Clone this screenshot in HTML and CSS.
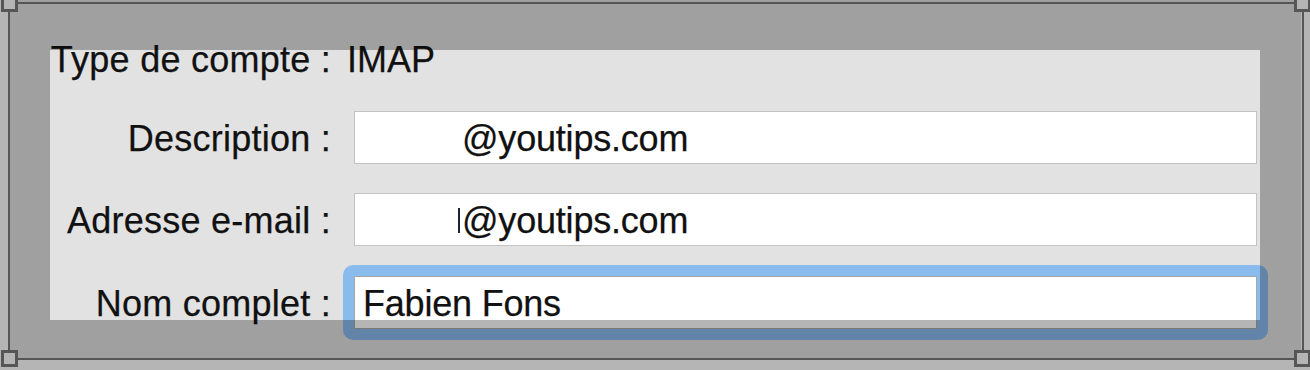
FILE: index.html
```html
<!DOCTYPE html>
<html lang="fr">
<head>
  <meta charset="UTF-8">
  <title>Compte - Informations</title>
  <link rel="stylesheet" href="styles.css">
</head>
<body>
  <div class="window">
    <div class="account-form">
      <div class="row row-type">
        <span class="label">Type de compte :</span>
        <span class="value">IMAP</span>
      </div>
      <div class="row">
        <span class="label">Description :</span>
        <div class="field"><span class="hidden-part"></span>@youtips.com</div>
      </div>
      <div class="row">
        <span class="label">Adresse e-mail :</span>
        <div class="field"><span class="hidden-part short"></span><span class="sliver"></span>@youtips.com</div>
      </div>
      <div class="row row-last">
        <span class="label">Nom complet :</span>
        <div class="field focused">Fabien Fons</div>
      </div>
    </div>
  </div>

  <!-- crop selection drawn over the screenshot -->
  <div class="crop"></div>
  <div class="crop-frame">
    <span class="handle tl"></span>
    <span class="handle tr"></span>
    <span class="handle bl"></span>
    <span class="handle br"></span>
  </div>
</body>
</html>
```

FILE: styles.css
```css
/* page */
body {
  margin: 0;
  padding: 0;
  background-color: #fff;
  font-family: "Liberation Sans", Arial, Helvetica, sans-serif;
  color: #111;
  overflow: hidden;
}

.window {
  position: relative;
  isolation: isolate;
  margin-left: 10px;
  width: 1291px;
  height: 358px;
  background-color: #e2e2e2;
}

.account-form {
  padding: 40px 0 0 39px;
  font-size: 36px;
  line-height: 40px;
  -webkit-text-stroke: 0.25px #111;
}

.row {
  display: flex;
  align-items: baseline;
  margin-top: 29px;
}

.row-type {
  margin-top: 0;
  padding-bottom: 2px;
}

.row-last {
  margin-top: 30px;
}

.label {
  width: 282px;
  text-align: right;
  white-space: nowrap;
  letter-spacing: 0.25px;
}

.value {
  margin-left: 16px;
}

.field {
  position: relative;
  box-sizing: border-box;
  width: 903px;
  height: 53px;
  margin-left: 23px;
  padding: 7px 0 0 8px;
  border: 1px solid #c3c3c3;
  background-color: #fff;
  white-space: nowrap;
  letter-spacing: -0.2px;
}

.hidden-part {
  display: inline-block;
  width: 99px;
}

.hidden-part.short {
  width: 95px;
}

.sliver {
  display: inline-block;
  width: 2px;
  height: 25px;
  margin-right: 2px;
  background-color: #1c2433;
}

/* focus ring around the active field */
.field.focused {
  border-color: #a8a8a8;
}

.field.focused::before {
  content: "";
  position: absolute;
  top: -12px;
  left: -12px;
  right: -12px;
  bottom: -12px;
  border-radius: 10px;
  background-color: #8abbed;
  z-index: -1;
}

/* darkened area outside the crop */
.crop {
  position: absolute;
  left: 50px;
  top: 50px;
  width: 1210px;
  height: 270px;
  box-shadow: 0 0 0 3000px rgba(0, 0, 0, 0.29);
  pointer-events: none;
}

.crop-frame {
  position: absolute;
  left: 8px;
  top: 2px;
  width: 1296px;
  height: 358px;
  box-sizing: border-box;
  border: 2px solid #565656;
}

.handle {
  position: absolute;
  width: 17px;
  height: 17px;
  box-sizing: border-box;
  border: 3px solid #565656;
  background-color: #b4b4b4;
}

.handle.tl { left: -9px; top: -9px; }
.handle.tr { right: -9px; top: -9px; }
.handle.bl { left: -9px; bottom: -9px; }
.handle.br { right: -9px; bottom: -9px; }
```
